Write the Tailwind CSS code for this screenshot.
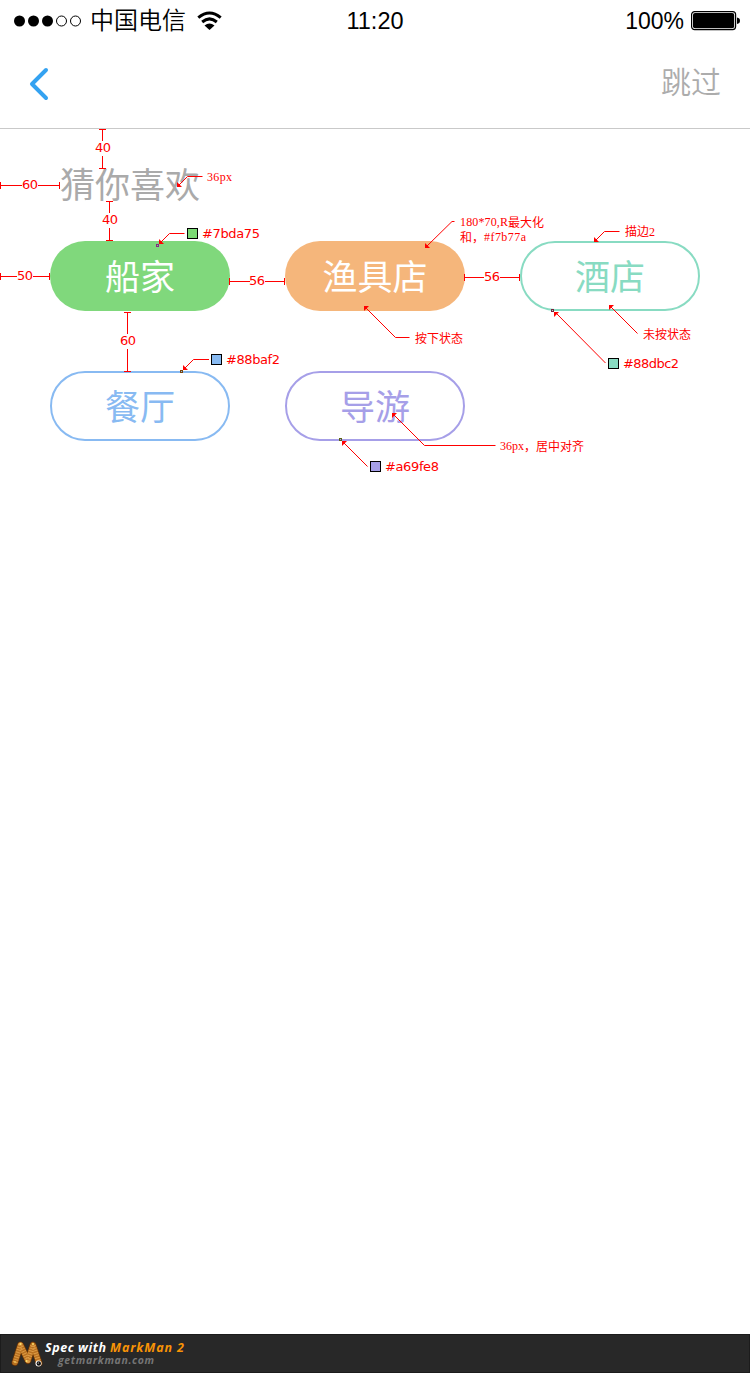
<!DOCTYPE html>
<html lang="zh-CN">
<head>
<meta charset="utf-8">
<title>猜你喜欢</title>
<script src="https://cdn.jsdelivr.net/npm/@tailwindcss/browser@4"></script>
</head>
<body class="bg-white">
<div class="relative flex h-[1373px] w-[750px] flex-col overflow-hidden bg-white font-['Liberation_Sans','Noto_Sans_CJK_SC',sans-serif]">
  <header class="flex h-[129px] flex-col border-b border-[#c9c9c9]">
    <div class="grid h-10 grid-cols-3 items-center text-black">
      <div class="flex h-10 items-center pl-[14px]">
        <svg class="h-3 w-[68px]" viewBox="0 0 68 12"><circle cx="5.5" cy="6" r="5.5"/><circle cx="19.5" cy="6" r="5.5"/><circle cx="33.5" cy="6" r="5.5"/><g fill="none" stroke="#000"><circle cx="47.5" cy="6" r="5"/><circle cx="61.5" cy="6" r="5"/></g></svg>
        <span class="ml-[8px] font-['Noto_Sans_CJK_SC',sans-serif] text-[24px] leading-[36px] font-[350] whitespace-nowrap pb-[3px]">中国电信</span>
        <svg class="ml-[11px] h-[20px] w-[25px]" viewBox="0 0 25 20" fill="none" stroke="#000" stroke-width="3"><path d="M1.3 6.7Q12.5 -2.7 23.7 6.7"/><path d="M5.2 11Q12.5 4.8 19.8 11"/><path d="M7.500 14.5Q12.5 10.300 17.500 14.5L12.5 19Z" fill="#000" stroke="none"/></svg>
      </div>
      <div class="pt-[1px] text-center text-[23.5px] leading-10">11:20</div>
      <div class="flex h-10 items-center justify-end pr-[10px]">
        <span class="mr-[7px] pt-[1px] text-[23px] leading-10">100%</span>
        <svg class="h-5 w-[49px]" viewBox="0 0 49 20"><rect x=".6" y=".6" width="44" height="18" rx="3" fill="#fff" stroke="#000" stroke-width="1.2"/><rect x="2" y="2" width="41.2" height="15.2" rx="2"/><path d="M46 6.5Q49 7 49 9.8T46 13Z"/></svg>
      </div>
    </div>
    <div class="flex h-[88px] items-center justify-between pr-[29px] pl-[29px]">
      <svg class="h-[34px] w-5" viewBox="0 0 20 34" fill="none" stroke="#34a2f1" stroke-width="4" stroke-linecap="round" stroke-linejoin="round"><path d="M17 3L3 17L17 31"/></svg>
      <span class="-mt-[7px] font-['Noto_Sans_CJK_SC',sans-serif] text-[30px] font-[350] text-[#acacac]">跳过</span>
    </div>
  </header>

  <main class="flex-1 px-[50px] pt-[36px] font-['Noto_Sans_CJK_SC',sans-serif] text-[35px]">
    <h1 class="h-[76px] pl-[10px] leading-[36px] text-[#aaaaaa] font-normal">猜你喜欢</h1>
    <div class="grid grid-cols-[180px_180px_180px] gap-x-[55px] gap-y-[60px] leading-none">
      <button class="flex h-[70px] items-center justify-center rounded-full bg-[#80d87c] pb-1 text-white">船家</button>
      <button class="flex h-[70px] items-center justify-center rounded-full bg-[#f5b67b] pb-1 text-white">渔具店</button>
      <button class="flex h-[70px] items-center justify-center rounded-full border-2 border-[#88dbc2] pb-1 text-[#88dbc2]">酒店</button>
      <button class="flex h-[70px] items-center justify-center rounded-full border-2 border-[#88baf2] pb-1 text-[#88baf2]">餐厅</button>
      <button class="flex h-[70px] items-center justify-center rounded-full border-2 border-[#a69fe8] pb-1 text-[#a69fe8]">导游</button>
    </div>
  </main>

  <!-- Measurement and note overlay -->
  <svg class="pointer-events-none absolute top-0 left-0 h-[1373px] w-[750px]" viewBox="0 0 750 1373" fill="none" stroke="#f00" stroke-width="1">
    <g shape-rendering="crispEdges">
      <path d="M99 129.5H106M102.5 129V141M102.5 156V168M99 168.5H106"/>
      <path d="M106 201.5H113M109.5 201V213M109.5 228V240M106 240.5H113"/>
      <path d="M.5 182V189M0 185.5H22M38 185.5H60M59.5 182V189"/>
      <path d="M.5 273V280M0 276.5H17M33 276.5H50M49.5 273V280"/>
      <path d="M229.5 278V285M229 281.5H250M265 281.5H285M284.5 278V285"/>
      <path d="M464.5 274V281M464 277.5H484M500 277.5H520M519.5 274V281"/>
      <path d="M124 312.5H131M127.5 312V334M127.5 349V371M124 371.5H131"/>
    </g>
    <g>
      <path d="M202.500 176.500H187.500L178 186"/>
      <path d="M184.500 233.500H169.500L160 243"/>
      <path d="M209 359.500H193.500L184 369"/>
      <path d="M454.500 221.500H452L426 247"/>
      <path d="M619.500 231.500H604.500L595 241"/>
      <path d="M409.500 337.500H395.500L365 307"/>
      <path d="M495.500 445.500H424.500L393 414"/>
      <path d="M637.500 333.500L610 306"/>
      <path d="M605.500 363L555 312"/>
      <path d="M367.500 466.500L342 441"/>
    </g>
    <g fill="#f00" stroke="none">
      <path d="M177 182v5h5z"/><path d="M159 239v5h5z"/><path d="M183 365v5h5z"/><path d="M425 243v5h5z"/><path d="M594 237v5h5z"/>
      <path d="M364 306h5l-5 5z"/><path d="M392 413h5l-5 5z"/><path d="M609 305h5l-5 5z"/><path d="M554 312h5l-5 5z"/><path d="M342 441h5l-5 5z"/>
    </g>
    <g shape-rendering="crispEdges">
      <g stroke="#000">
        <rect x="187.500" y="228.500" width="10" height="10" fill="#7bda75"/>
        <rect x="211.500" y="354.500" width="10" height="10" fill="#88baf2"/>
        <rect x="608.500" y="358.500" width="10" height="10" fill="#88dbc2"/>
        <rect x="370.500" y="461.500" width="10" height="10" fill="#a69fe8"/>
      </g>
      <rect x="156.500" y="244.500" width="2" height="2" stroke="#842586"/>
      <rect x="180.500" y="370.500" width="2" height="2" stroke="#77450d"/>
      <rect x="551.500" y="309.500" width="2" height="2" stroke="#77243d"/>
      <rect x="339.500" y="438.500" width="2" height="2" stroke="#596017"/>
    </g>
    <g fill="#f00" stroke="none" class="font-['DejaVu_Sans',sans-serif] text-[13px]">
      <text x="95" y="152" textLength="16">40</text>
      <text x="102" y="224" textLength="16">40</text>
      <text x="22" y="189" textLength="16">60</text>
      <text x="17" y="280" textLength="16">50</text>
      <text x="249" y="285" textLength="16">56</text>
      <text x="484" y="281" textLength="16">56</text>
      <text x="120" y="345" textLength="16">60</text>
      <text x="202" y="238" textLength="58">#7bda75</text>
      <text x="226" y="364" textLength="54">#88baf2</text>
      <text x="623" y="368" textLength="56">#88dbc2</text>
      <text x="385" y="471" textLength="54">#a69fe8</text>
    </g>
    <g fill="#f00" stroke="none" class="font-['Liberation_Serif','Noto_Sans_CJK_SC',serif] text-[12px]">
      <text x="207" y="181" textLength="25">36px</text>
      <text x="460" y="226" textLength="48">180*70,R</text><text x="508" y="227">最大化</text>
      <text x="460" y="242">和，</text><text x="484" y="241" textLength="42">#f7b77a</text>
      <text x="625" y="236">描边2</text>
      <text x="415" y="343">按下状态</text>
      <text x="643" y="338.500">未按状态</text>
      <text x="500" y="450" textLength="24">36px</text><text x="524" y="451">，居中对齐</text>
    </g>
  </svg>

  <footer class="flex h-[39px] items-center border border-[#1c1c1c] bg-[#282828] pl-[10px] font-['Open_Sans',sans-serif] font-bold italic">
    <svg class="h-[30px] w-[34px] shrink-0" viewBox="0 0 34 30" fill="none" stroke-linecap="round" stroke-linejoin="round">
      <path d="M4 23.500L9.500 6L17 21.500L22 6L28 24" stroke="#633207" stroke-width="7"/>
      <path d="M4 23.500L9.500 6L17 21.500L22 6L28 24" stroke="#b87020" stroke-width="5.500"/>
      <path d="M4 23.500L9.500 6L17 21.500L22 6L28 24" stroke="#dc9a45" stroke-width="5" stroke-dasharray="1 1.500" stroke-linecap="butt"/>
      <g fill="#ffe36e"><circle cx="9.500" cy="5" r="1"/><circle cx="22" cy="5" r="1"/><circle cx="15.500" cy="22" r="1"/><circle cx="4" cy="23" r=".8"/></g>
      <circle cx="27.500" cy="24.500" r="3" fill="#fff"/><circle cx="27.800" cy="24.500" r="2.200" fill="#111"/><circle cx="27.300" cy="24" r=".6" fill="#fff"/>
    </svg>
    <svg class="h-[33px] w-[150px]" viewBox="0 0 150 33">
      <text x="0" y="15" textLength="61" lengthAdjust="spacing" class="fill-white text-[12.500px]">Spec with</text>
      <text x="65" y="15" textLength="74" lengthAdjust="spacing" class="fill-[#f89406] text-[12.500px]">MarkMan 2</text>
      <text x="13" y="27" textLength="96" lengthAdjust="spacing" class="fill-[#757575] text-[10.500px]">getmarkman.com</text>
    </svg>
  </footer>
</div>
</body>
</html>
